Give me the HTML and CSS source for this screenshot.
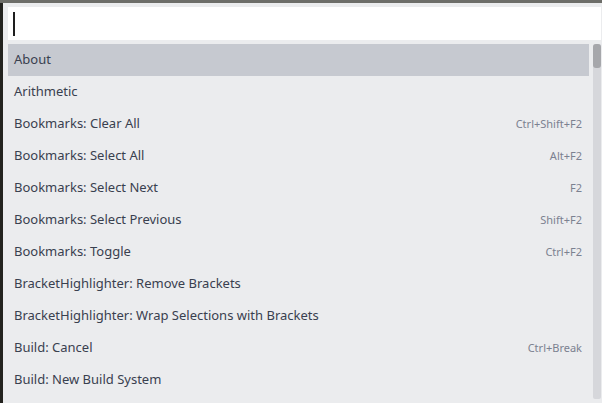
FILE: index.html
```html
<!DOCTYPE html>
<html>
<head>
<meta charset="utf-8">
<link rel="stylesheet" href="styles.css">
</head>
<body>
<div class="topbar"></div>
<div class="main">
  <div class="edge"></div>
  <div class="panel">
    <div class="input"><span class="caret"></span></div>
    <div class="listwrap">
      <ul class="list">
        <li class="row selected"><span class="label">About</span></li>
        <li class="row"><span class="label">Arithmetic</span></li>
        <li class="row"><span class="label">Bookmarks: Clear All</span><span class="key">Ctrl+Shift+F2</span></li>
        <li class="row"><span class="label">Bookmarks: Select All</span><span class="key">Alt+F2</span></li>
        <li class="row"><span class="label">Bookmarks: Select Next</span><span class="key">F2</span></li>
        <li class="row"><span class="label">Bookmarks: Select Previous</span><span class="key">Shift+F2</span></li>
        <li class="row"><span class="label">Bookmarks: Toggle</span><span class="key">Ctrl+F2</span></li>
        <li class="row"><span class="label">BracketHighlighter: Remove Brackets</span></li>
        <li class="row"><span class="label">BracketHighlighter: Wrap Selections with Brackets</span></li>
        <li class="row"><span class="label">Build: Cancel</span><span class="key">Ctrl+Break</span></li>
        <li class="row"><span class="label">Build: New Build System</span></li>
      </ul>
      <div class="scrollbar"><div class="thumb"></div></div>
    </div>
  </div>
</div>
</body>
</html>
```
FILE: styles.css
```css
html, body {
  margin: 0;
  padding: 0;
  height: 100%;
  overflow: hidden;
}
body {
  background: #ebecee;
  font-family: "Noto Sans", "Open Sans", sans-serif;
  display: flex;
  flex-direction: column;
}
.topbar {
  height: 3px;
  background: #6d6e69;
  flex: none;
}
.main {
  flex: 1;
  display: flex;
}
.edge {
  width: 3px;
  background: #23231f;
  flex: none;
}
.panel {
  flex: 1;
  padding: 4px 1px 0 5px;
  display: flex;
  flex-direction: column;
}
.input {
  height: 33px;
  background: #ffffff;
  display: flex;
  align-items: center;
  padding-left: 5px;
  flex: none;
}
.caret {
  width: 2px;
  height: 24px;
  background: #1e1e1e;
}
.listwrap {
  margin-top: 4px;
  display: flex;
  gap: 4px;
}
.list {
  list-style: none;
  margin: 0;
  padding: 0;
  width: 581px;
}
.row {
  height: 32px;
  box-sizing: border-box;
  display: flex;
  align-items: center;
  justify-content: space-between;
  padding: 0 7px 2px 6px;
  color: #39404f;
  font-size: 13px;
}
.row.selected {
  background: #c6c9d0;
}
.key {
  font-size: 11px;
  color: #7b8190;
}
.scrollbar {
  width: 8px;
  height: 355px;
  background: #d6d7db;
  border-radius: 2px;
}
.thumb {
  height: 24px;
  background: #a6a7ab;
  border-radius: 3px;
}
```
